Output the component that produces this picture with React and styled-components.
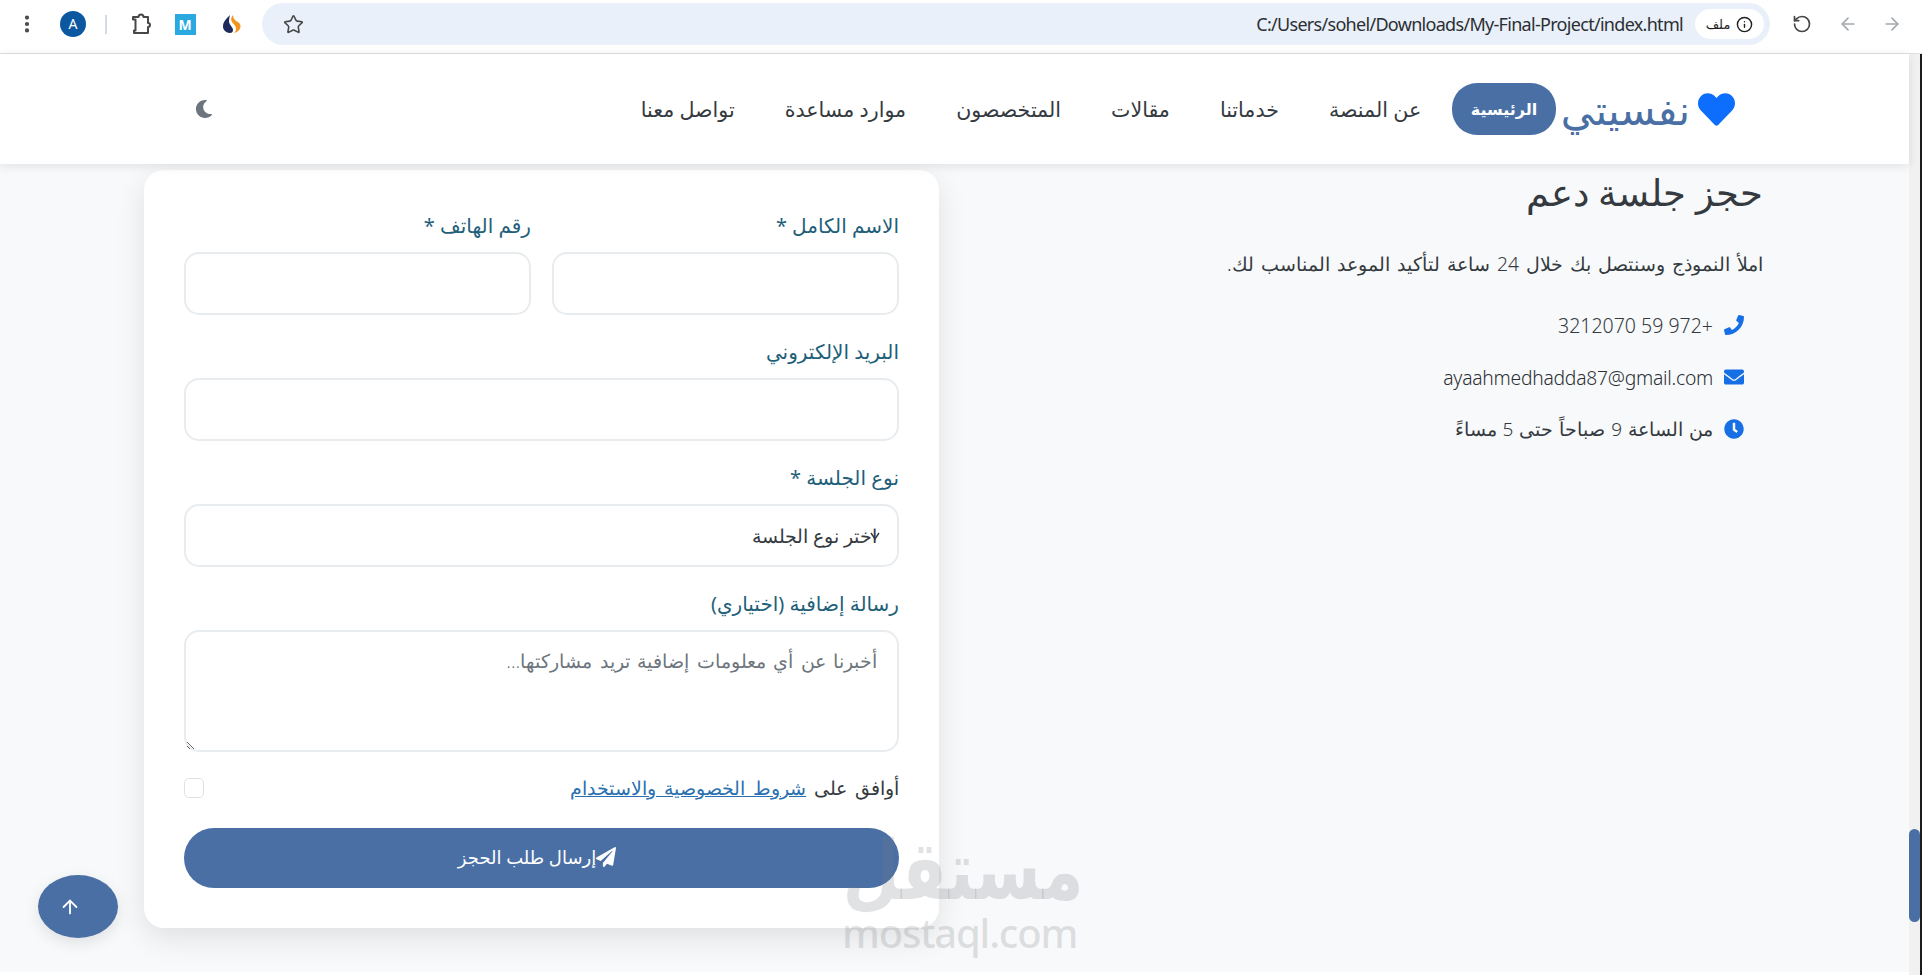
import React from 'react';
import styled, { createGlobalStyle } from 'styled-components';
import { FaPhone, FaEnvelope, FaClock, FaPaperPlane, FaHeart, FaMoon } from 'react-icons/fa';
import { Star, RotateCcw, ArrowLeft, ArrowRight, ArrowUp, Info, EllipsisVertical } from 'lucide-react';

const primary = '#4a6fa5';
const accent = '#166fe5';
const fontStack = `'Noto Sans', 'Open Sans', 'DejaVu Sans', sans-serif`;

const GlobalStyle = createGlobalStyle`
  html, body {
    margin: 0;
    height: 100%;
    overflow: hidden;
    background: #fff;
  }
  * {
    box-sizing: border-box;
  }
  body {
    font-family: ${fontStack};
    color: #343a40;
  }
`;

const Window = styled.div`
  position: relative;
  display: flex;
  flex-direction: column;
  height: 975px;
  overflow: hidden;
`;

const BrowserBar = styled.div`
  display: flex;
  align-items: center;
  height: 54px;
  flex: none;
  background: #fff;
  border-bottom: 1px solid #dfe1e5;
  direction: ltr;
  padding-bottom: 5px;
`;

const ToolSlot = styled.div`
  width: ${p => p.$w}px;
  flex: none;
  display: flex;
  justify-content: center;
  align-items: center;
  color: ${p => p.$color || '#474747'};
`;

const Avatar = styled.div`
  width: 26px;
  height: 26px;
  border-radius: 50%;
  background: #0b57a0;
  color: #fff;
  font-size: 14px;
  line-height: 26px;
  text-align: center;
`;

const Divider = styled.div`
  width: 2px;
  height: 19px;
  background: #d3dbe6;
`;

const ExtTile = styled.div`
  width: 21px;
  height: 21px;
  background: #29a9e0;
  color: #fff;
  font-size: 14px;
  font-weight: 700;
  line-height: 21px;
  text-align: center;
`;

const AddressBar = styled.div`
  display: flex;
  align-items: center;
  flex: none;
  width: 1508px;
  height: 42px;
  margin-left: 6px;
  padding: 0 6px 0 21px;
  border-radius: 21px;
  background: #e9f0f9;
`;

const UrlText = styled.div`
  margin-left: auto;
  margin-right: 12px;
  font-size: 18px;
  letter-spacing: -0.7px;
  color: #2b2f33;
`;

const SiteChip = styled.div`
  display: flex;
  align-items: center;
  justify-content: center;
  gap: 6px;
  width: 69px;
  height: 30px;
  border-radius: 15px;
  background: #fff;
  color: #1f1f1f;
  font-size: 13px;
  font-weight: 500;
`;

const Viewport = styled.div`
  flex: 1;
  min-height: 0;
  display: flex;
  direction: ltr;
`;

const Page = styled.div`
  flex: 1;
  min-width: 0;
  height: 918px;
  display: flex;
  flex-direction: column;
  background: #f8f9fa;
  direction: rtl;
`;

const Rail = styled.div`
  flex: none;
  width: 13px;
  background: #f1f1f1;
  border-right: 2px solid #1c1c1c;
  padding-top: 775px;
`;

const Thumb = styled.div`
  width: 11px;
  height: 93px;
  border-radius: 6px;
  background: ${primary};
`;

const Nav = styled.nav`
  flex: none;
  height: 110px;
  display: flex;
  align-items: center;
  justify-content: space-between;
  padding: 0 174px 0 195px;
  background: #fff;
  box-shadow: 0 2px 10px rgba(0, 0, 0, 0.1);
  position: relative;
  z-index: 2;
`;

const NavStart = styled.div`
  display: flex;
  align-items: center;
`;

const Logo = styled.div`
  display: flex;
  align-items: center;
  gap: 8px;
  margin-left: 5px;
  color: ${primary};
  font-size: 41.5px;
  font-weight: 500;
  line-height: 50px;
  svg {
    color: #0d6efd;
  }
`;

const NavLink = styled.a`
  display: block;
  height: 52px;
  line-height: 52px;
  padding: 0 ${p => (p.$active ? 18.5 : 25)}px;
  margin-left: ${p => (p.$active ? 6 : 0)}px;
  border-radius: 25px;
  font-size: ${p => (p.$active ? 16 : 20.6)}px;
  font-weight: ${p => (p.$active ? 600 : 400)};
  color: ${p => (p.$active ? '#fff' : '#343a40')};
  background: ${p => (p.$active ? primary : 'transparent')};
`;

const ThemeIcon = styled.div`
  color: #6c757d;
  font-size: 18px;
  display: flex;
`;

const Content = styled.main`
  flex: 1;
  min-height: 0;
  display: flex;
  justify-content: space-between;
  padding: 6px 146px 0 144px;
`;

const InfoColumn = styled.section`
  width: 540px;
`;

const Heading = styled.h2`
  margin: -3px 0 0;
  font-size: 37px;
  font-weight: 300;
  line-height: 50px;
  color: #343a40;
`;

const Lead = styled.p`
  margin: 32px 0 31px;
  font-size: 19.3px;
  font-weight: 300;
  line-height: 30px;
  word-spacing: 2px;
  white-space: nowrap;
`;

const ContactList = styled.div`
  display: flex;
  flex-direction: column;
  gap: 22px;
  padding-right: 19px;
`;

const ContactRow = styled.div`
  display: flex;
  align-items: center;
  gap: 11px;
  height: 30px;
  font-size: 19px;
  font-weight: 300;
  word-spacing: 1px;
  svg {
    color: ${accent};
    width: 20px;
    height: 20px;
    flex: none;
  }
`;

const PhoneText = styled.span`
  font-size: 19.5px;
  word-spacing: 0;
`;

const EmailText = styled.span`
  font-size: 19.3px;
  letter-spacing: -0.25px;
  color: #2b3035;
`;

const Card = styled.form`
  flex: none;
  width: 795px;
  height: 758px;
  padding: 40px 40px 0;
  border-radius: 20px;
  background: #fff;
  box-shadow: 0 10px 30px rgba(0, 0, 0, 0.1);
`;

const FieldRow = styled.div`
  display: grid;
  grid-template-columns: 1fr 1fr;
  gap: 21px;
`;

const Field = styled.div`
  margin-bottom: 21px;
  position: relative;
`;

const Label = styled.label`
  display: block;
  height: 34px;
  line-height: 31px;
  margin-bottom: 8px;
  font-size: 20px;
  font-weight: 400;
  color: #1f5f7a;
`;

const controlStyles = `
  display: block;
  width: 100%;
  border: 2px solid #e9ecef;
  border-radius: 15px;
  background: #fff;
  font-family: ${fontStack};
  font-size: 18.5px;
  font-weight: 300;
  color: #343a40;
  outline: none;
`;

const TextInput = styled.input`
  ${controlStyles}
  height: 63px;
  padding: 0 20px;
`;

const SelectInput = styled.select`
  ${controlStyles}
  height: 63px;
  padding: 0 20px;
  appearance: none;
`;

const SelectMark = styled.svg`
  position: absolute;
  top: 69px;
  right: 19px;
  width: 10px;
  height: 10px;
  color: #343a40;
`;

const MessageInput = styled.textarea`
  ${controlStyles}
  height: 122px;
  padding: 14px 20px;
  font-size: 19.1px;
  line-height: 30px;
  word-spacing: 2.5px;
  &::placeholder {
    color: #6c757d;
  }
`;

const ConsentRow = styled.div`
  display: flex;
  align-items: center;
  justify-content: space-between;
  height: 30px;
  font-size: 18.9px;
  font-weight: 300;
  word-spacing: 3px;
`;

const TermsLink = styled.a`
  color: #2a70b0;
  text-decoration: underline;
`;

const CheckBox = styled.input`
  appearance: none;
  margin: 0;
  width: 20px;
  height: 20px;
  border: 1px solid #dee2e6;
  border-radius: 5px;
  background: #fff;
`;

const SubmitButton = styled.button`
  display: flex;
  align-items: center;
  justify-content: center;
  width: 100%;
  height: 60px;
  margin-top: 25px;
  padding: 0 9px 2px 0;
  border: none;
  border-radius: 30px;
  background: ${primary};
  color: #fff;
  font-family: ${fontStack};
  font-size: 18px;
  font-weight: 500;
`;

const BackToTop = styled.div`
  position: absolute;
  left: 38px;
  top: 875px;
  width: 80px;
  height: 63px;
  padding-right: 16px;
  border-radius: 50%;
  background: ${primary};
  color: #fff;
  display: flex;
  align-items: center;
  justify-content: center;
  box-shadow: 0 5px 15px rgba(0, 0, 0, 0.1);
`;

const Watermark = styled.div`
  position: absolute;
  left: 842px;
  top: 837px;
  width: 232px;
  text-align: center;
  color: rgba(120, 125, 130, 0.22);
  pointer-events: none;
  direction: ltr;
`;

const WatermarkWord = styled.div`
  font-size: 68px;
  font-weight: 700;
  line-height: 76px;
  transform: translateX(-3px) scale(0.97, 1.2);
  transform-origin: center bottom;
`;

const WatermarkSite = styled.div`
  font-size: 40px;
  font-weight: 500;
  line-height: 40px;
  letter-spacing: -1.2px;
`;

const PuzzleIcon = () => (
  <svg width="22" height="22" viewBox="0 0 22 22" fill="none" stroke="#474747" strokeWidth="2" strokeLinejoin="round">
    <path d="M3 4h5.500a2.500 2.500 0 0 1 5 0H18v6a2 2 0 0 1 0 4v6H4v-2.500h1.500V6.500H3z" />
  </svg>
);

const DropLogo = () => (
  <svg width="20" height="20" viewBox="0 0 20 20">
    <path d="M8 1C4 5 1 8 1 12.500 1 16 4 19 8 19c2 0 3-1 3-3 0-3-4-5-4-9 0-2 .5-4 1-6z" fill="#1f2a5c" />
    <path d="M11 1c-2 2-2.500 5-1 7 1.500 2 4 3.500 4 7 0 2-1 3.500-2.500 4 4-.5 7-3 7-7 0-3-3-4-5-5.500C12 5 11 3 11 1z" fill="#f0961f" />
  </svg>
);

const fields = {
  name: 'الاسم الكامل *',
  phone: 'رقم الهاتف *',
  email: 'البريد الإلكتروني',
  session: 'نوع الجلسة *',
  message: 'رسالة إضافية (اختياري)',
};

const navItems = ['عن المنصة', 'خدماتنا', 'مقالات', 'المتخصصون', 'موارد مساعدة', 'تواصل معنا'];

const App = () => (
  <Window>
    <GlobalStyle />
    <BrowserBar>
      <ToolSlot $w={54}><EllipsisVertical size={22} strokeWidth={2.6} /></ToolSlot>
      <ToolSlot $w={38}><Avatar>A</Avatar></ToolSlot>
      <ToolSlot $w={28}><Divider /></ToolSlot>
      <ToolSlot $w={42}><PuzzleIcon /></ToolSlot>
      <ToolSlot $w={46}><ExtTile>M</ExtTile></ToolSlot>
      <ToolSlot $w={48}><DropLogo /></ToolSlot>
      <AddressBar>
        <Star size={21} strokeWidth={1.8} color="#474747" />
        <UrlText>C:/Users/sohel/Downloads/My-Final-Project/index.html</UrlText>
        <SiteChip dir="rtl">
          <Info size={17} color="#1f1f1f" />
          <span>ملف</span>
        </SiteChip>
      </AddressBar>
      <ToolSlot $w={64}><RotateCcw size={20} /></ToolSlot>
      <ToolSlot $w={28} $color="#a3a8ae"><ArrowLeft size={20} /></ToolSlot>
      <ToolSlot $w={60} $color="#a3a8ae"><ArrowRight size={20} /></ToolSlot>
    </BrowserBar>
    <Viewport>
      <Page>
        <Nav>
          <NavStart>
            <Logo>
              <FaHeart size={37} />
              <span>نفسيتي</span>
            </Logo>
            <NavLink $active>الرئيسية</NavLink>
            {navItems.map(item => (
              <NavLink key={item}>{item}</NavLink>
            ))}
          </NavStart>
          <ThemeIcon><FaMoon /></ThemeIcon>
        </Nav>
        <Content>
          <InfoColumn>
            <Heading>حجز جلسة دعم</Heading>
            <Lead>املأ النموذج وسنتصل بك خلال 24 ساعة لتأكيد الموعد المناسب لك.</Lead>
            <ContactList>
              <ContactRow><FaPhone /><PhoneText dir="rtl">+972 59 3212070</PhoneText></ContactRow>
              <ContactRow><FaEnvelope /><EmailText>ayaahmedhadda87@gmail.com</EmailText></ContactRow>
              <ContactRow><FaClock /><span>من الساعة 9 صباحاً حتى 5 مساءً</span></ContactRow>
            </ContactList>
          </InfoColumn>
          <Card>
            <FieldRow>
              <Field>
                <Label>{fields.name}</Label>
                <TextInput type="text" />
              </Field>
              <Field>
                <Label>{fields.phone}</Label>
                <TextInput type="tel" />
              </Field>
            </FieldRow>
            <Field>
              <Label>{fields.email}</Label>
              <TextInput type="email" />
            </Field>
            <Field>
              <Label>{fields.session}</Label>
              <SelectInput defaultValue="">
                <option value="">اختر نوع الجلسة</option>
              </SelectInput>
              <SelectMark viewBox="0 0 10 10" fill="none" stroke="currentColor" strokeWidth="1.4">
                <path d="M1 2l4 6 4-6" />
              </SelectMark>
            </Field>
            <Field>
              <Label>{fields.message}</Label>
              <MessageInput placeholder="أخبرنا عن أي معلومات إضافية تريد مشاركتها..." />
            </Field>
            <ConsentRow>
              <span>أوافق على <TermsLink>شروط الخصوصية والاستخدام</TermsLink></span>
              <CheckBox type="checkbox" />
            </ConsentRow>
            <SubmitButton type="button"><FaPaperPlane size={20} />إرسال طلب الحجز</SubmitButton>
          </Card>
        </Content>
      </Page>
      <Rail><Thumb /></Rail>
    </Viewport>
    <BackToTop><ArrowUp size={22} /></BackToTop>
    <Watermark>
      <WatermarkWord>مستقل</WatermarkWord>
      <WatermarkSite>mostaql.com</WatermarkSite>
    </Watermark>
  </Window>
);

export default App;
